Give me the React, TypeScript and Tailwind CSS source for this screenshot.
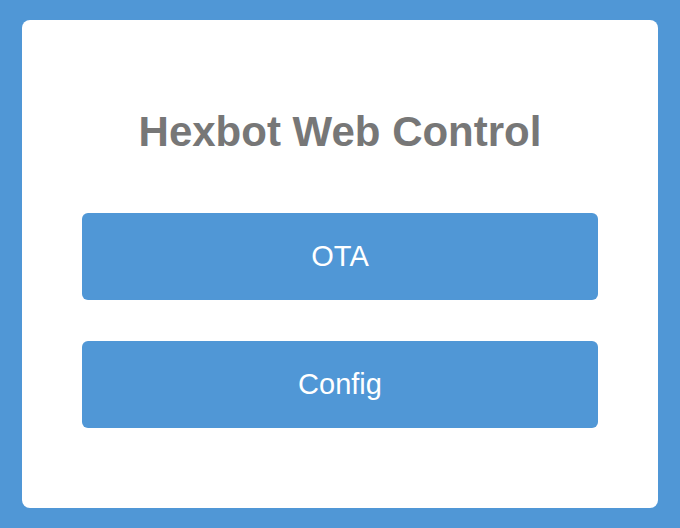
export default function App() {
  return (
    <div className="min-h-screen w-full bg-[#5097d6] px-[22px] pt-[20px] pb-[20px]" style={{ fontFamily: '"Liberation Sans", Arial, sans-serif' }}>
      <div className="h-[488px] w-[636px] rounded-[8px] bg-white px-[60px] pt-[88px]">
        <h1 className="mb-[57px] text-center text-[42px] font-bold leading-[48px] text-[#777777]">
          Hexbot Web Control
        </h1>
        <div className="flex flex-col gap-[41px]">
          <button className="flex h-[87px] w-full items-center justify-center rounded-[6px] bg-[#5097d6] text-[29px] text-white">
            OTA
          </button>
          <button className="flex h-[87px] w-full items-center justify-center rounded-[6px] bg-[#5097d6] text-[29px] text-white">
            Config
          </button>
        </div>
      </div>
    </div>
  );
}
